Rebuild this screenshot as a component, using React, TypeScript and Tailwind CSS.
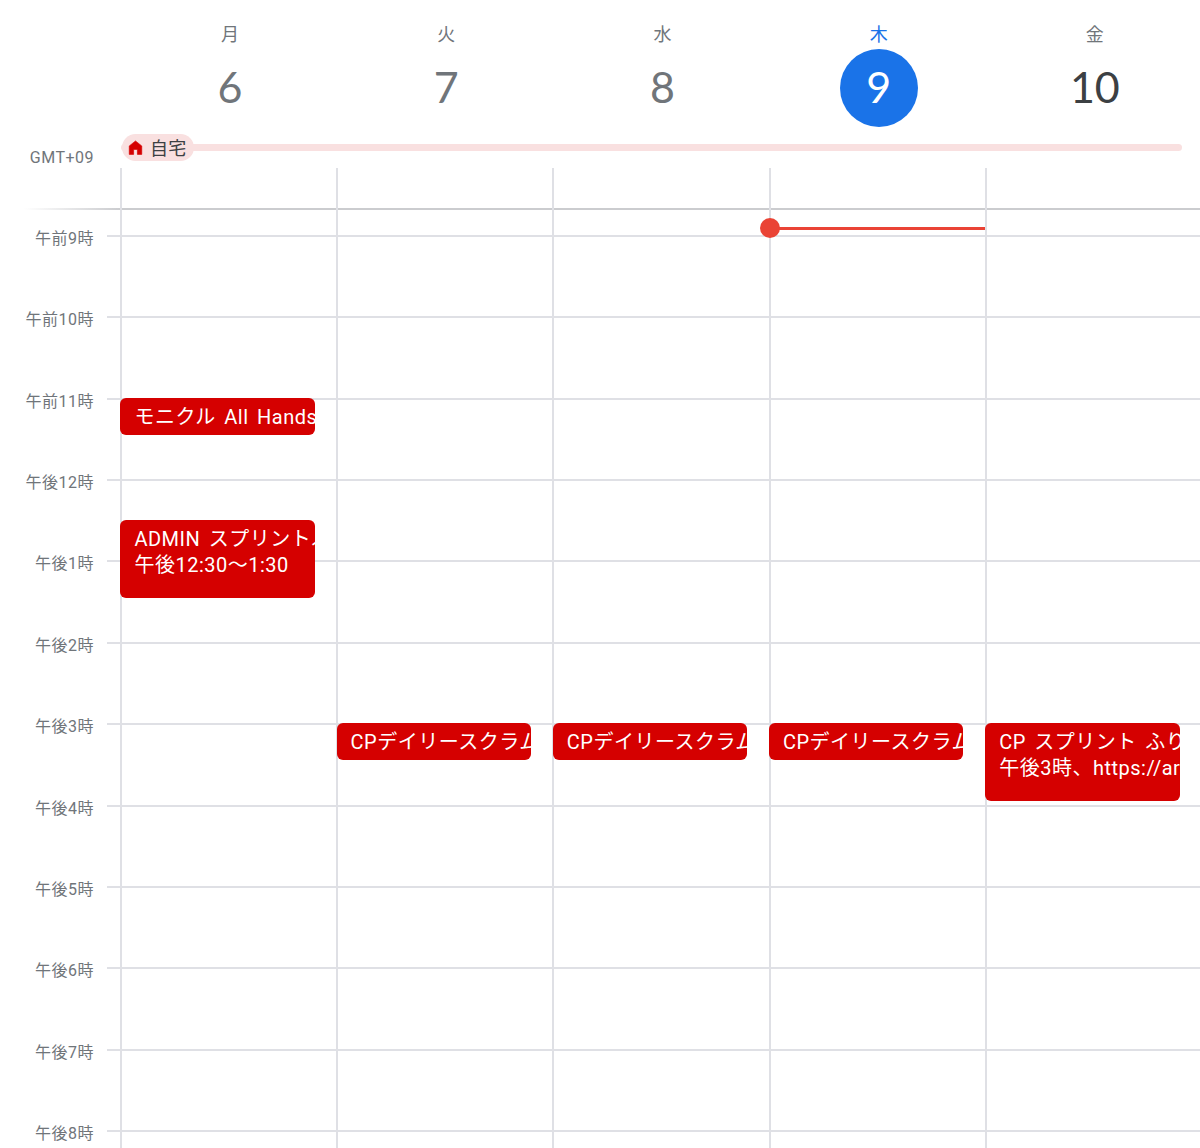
// App.tsx
const days = [
  { label: "月", num: "6" },
  { label: "火", num: "7" },
  { label: "水", num: "8" },
  { label: "木", num: "9", today: true },
  { label: "金", num: "10", dark: true },
];

const hours = [
  "午前9時",
  "午前10時",
  "午前11時",
  "午後12時",
  "午後1時",
  "午後2時",
  "午後3時",
  "午後4時",
  "午後5時",
  "午後6時",
  "午後7時",
  "午後8時",
];

const font = "font-['Roboto','Noto_Sans_CJK_JP',sans-serif]";

function EventChip({ className, title, sub }: { className: string; title: string; sub?: string }) {
  return (
    <div
      className={`absolute left-[-1.6px] w-[194.5px] overflow-hidden whitespace-nowrap rounded-[6px] bg-[#d50000] pl-[14px] pt-[6px] text-[20px] leading-[26px] tracking-[0.5px] text-white [word-spacing:3px] ${className}`}
    >
      <div>{title}</div>
      {sub && <div>{sub}</div>}
    </div>
  );
}

export default function App() {
  return (
    <div className={`h-[1148px] w-[1200px] overflow-hidden bg-white ${font}`}>
      {/* Day header */}
      <div className="flex h-[134px] pl-[122px]">
        {days.map((d) => (
          <div key={d.num} className="flex w-[216.2px] shrink-0 flex-col items-center pt-[23px]">
            <div className={`text-[18px] leading-[24px] ${d.today ? "text-[#1a73e8]" : "text-[#70757a]"}`}>
              {d.label}
            </div>
            <div
              className={`mt-[2px] flex h-[78px] w-[78px] items-center justify-center rounded-full pb-[2px] font-['Lato',sans-serif] text-[43px] font-normal ${
                d.today ? "bg-[#1a73e8] text-white" : d.dark ? "text-[#3c4043]" : "text-[#70757a]"
              }`}
            >
              {d.num}
            </div>
          </div>
        ))}
      </div>

      {/* All-day row */}
      <div className="flex h-[34px]">
        <div className="w-[94px] pt-[14px] text-right text-[16px] leading-[20px] tracking-[0.5px] text-[#70757a]">
          GMT+09
        </div>
        <div className="relative ml-[27px] h-[27px] w-[1061px]">
          <div className="absolute inset-x-0 top-[10px] h-[7px] rounded-full bg-[#f9e0e0]" />
          <div className="relative ml-[1px] flex h-[27px] w-[72px] items-center rounded-full bg-[#f9e0e0] pl-[6px] text-[18px] text-[#3c4043]">
            <svg className="h-[15px] w-[15px] text-[#d50000]" viewBox="0 0 24 24" fill="currentColor">
              <path d="M12 1.5 2 9.5V23h7v-8h6v8h7V9.5z" strokeLinejoin="round" stroke="currentColor" strokeWidth="1" />
            </svg>
            <span className="ml-[7px] translate-y-[1px] tracking-[0.3px]">自宅</span>
          </div>
        </div>
      </div>

      {/* Time grid */}
      <div className="relative">
        <div className="flex h-[67px] flex-col">
          <div className="mt-[40px] h-[2px] w-full bg-gradient-to-r from-white from-[2%] to-[#cbcccf] to-[10%]" />
        </div>
        {hours.map((h) => (
          <div key={h} className="flex h-[81.36px]">
            <div className="w-[94px] -translate-y-[6px] text-right text-[16px] leading-[20px] tracking-[0.5px] text-[#70757a]">
              {h}
            </div>
            <div className="ml-[13px] h-[2px] flex-1 bg-[#dfe0e5]" />
          </div>
        ))}

        {/* Columns and events */}
        <div className="absolute inset-y-0 left-[120px] right-0 flex">
          {[0, 1, 2, 3, 4].map((i) => (
            <div key={i} className="relative w-[216.2px] shrink-0 border-l-2 border-[#dfe0e5]">
              {i === 0 && (
                <>
                  <EventChip className="top-[230px] h-[37px]" title="モニクル All Hands" />
                  <EventChip className="top-[352px] h-[78px]" title="ADMIN スプリントふりかえり" sub="午後12:30〜1:30" />
                </>
              )}
              {i > 0 && i < 4 && <EventChip className="top-[555px] h-[37px]" title="CPデイリースクラム" />}
              {i === 4 && (
                <EventChip className="top-[555px] h-[78px]" title="CP スプリント ふりかえり" sub="午後3時、https://arc" />
              )}
              {i === 3 && (
                <>
                  <div className="absolute left-[-2px] top-[59px] h-[3px] w-[216px] bg-[#ea4335]" />
                  <div className="absolute left-[-11px] top-[50px] h-[20px] w-[20px] rounded-full bg-[#ea4335]" />
                </>
              )}
            </div>
          ))}
        </div>
      </div>
    </div>
  );
}
